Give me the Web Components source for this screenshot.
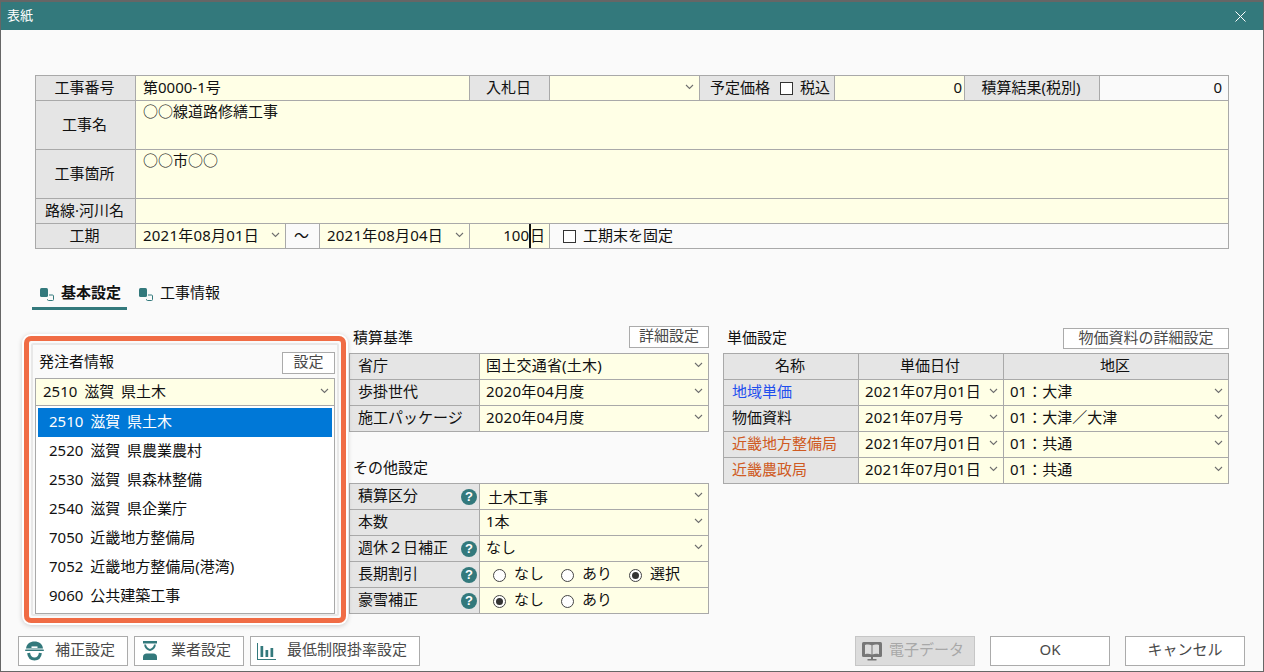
<!DOCTYPE html>
<html lang="ja">
<head>
<meta charset="utf-8">
<title>表紙</title>
<style>
html,body{margin:0;padding:0;background:#fafafa}
body{font:15px/20px "Noto Sans","Noto Sans CJK JP",sans-serif;color:#111}
.r{margin-left:auto}
.blue{color:#1f4fee}.org{color:#cf5a22}
</style>
</head>
<body>
<app-window>
  <span slot="title">表紙</span>

  <f-grid slot="top" style="width:1194px;grid-template-columns:99px 149px 33px 149px 79px 149px 134px 129px 134px 128px;grid-template-rows:24px 48px 48px 24px 24px">
    <f-cell kind="label" center>工事番号</f-cell>
    <f-cell kind="field" pad="7" style="grid-column:span 3">第0000-1号</f-cell>
    <f-cell kind="label" center>入札日</f-cell>
    <f-cell kind="field" select></f-cell>
    <f-cell kind="label" pad="10"><span>予定価格</span><x-check style="margin-left:10px;margin-right:7px"></x-check><span>税込</span></f-cell>
    <f-cell kind="field" num pr="2">0</f-cell>
    <f-cell kind="label" center>積算結果(税別)</f-cell>
    <f-cell kind="plain" num pr="6">0</f-cell>

    <f-cell kind="label" center>工事名</f-cell>
    <f-cell kind="field" pad="7" top style="grid-column:span 9">○○線道路修繕工事</f-cell>
    <f-cell kind="label" center>工事箇所</f-cell>
    <f-cell kind="field" pad="7" top style="grid-column:span 9">○○市○○</f-cell>
    <f-cell kind="label" center>路線·河川名</f-cell>
    <f-cell kind="field" style="grid-column:span 9"></f-cell>

    <f-cell kind="label" center>工期</f-cell>
    <f-cell kind="field" pad="7" select ls>2021年08月01日</f-cell>
    <f-cell kind="plain" center>〜</f-cell>
    <f-cell kind="field" pad="7" select ls>2021年08月04日</f-cell>
    <f-cell kind="field" num pr="4"><span class="r">100</span><i style="width:2px;height:24px;background:#111;margin:0 -1px 0 0;flex:none;align-self:flex-start"></i><span>日</span></f-cell>
    <f-cell kind="plain" pad="13" style="grid-column:span 5"><x-check style="margin-right:7px"></x-check><span>工期末を固定</span></f-cell>
  </f-grid>

  <tab-bar slot="tabs">
    <tab-item active>基本設定</tab-item>
    <tab-item>工事情報</tab-item>
  </tab-bar>

  <orderer-panel slot="left"></orderer-panel>

  <div slot="mid">
    <sec-head><span>積算基準</span><x-btn slot="action" style="width:80px;height:22px">詳細設定</x-btn></sec-head>
    <f-grid style="width:360px;grid-template-columns:129px 228px;grid-auto-rows:25px">
      <f-cell kind="label" pad="8">省庁</f-cell>
      <f-cell kind="field" pad="6" select ls>国土交通省(土木)</f-cell>
      <f-cell kind="label" pad="8">歩掛世代</f-cell>
      <f-cell kind="field" pad="6" select ls>2020年04月度</f-cell>
      <f-cell kind="label" pad="8">施工パッケージ</f-cell>
      <f-cell kind="field" pad="6" select ls>2020年04月度</f-cell>
    </f-grid>
    <sec-head style="margin-top:26px;height:25px;padding-bottom:8px"><span>その他設定</span></sec-head>
    <f-grid style="width:360px;grid-template-columns:129px 228px;grid-auto-rows:25px">
      <f-cell kind="label" pad="8"><span>積算区分</span><help-icon></help-icon></f-cell>
      <f-cell kind="field" pad="8" select><span style="padding-top:3px">土木工事</span></f-cell>
      <f-cell kind="label" pad="8">本数</f-cell>
      <f-cell kind="field" pad="6" select>1本</f-cell>
      <f-cell kind="label" pad="8"><span>週休２日補正</span><help-icon></help-icon></f-cell>
      <f-cell kind="field" pad="6" select>なし</f-cell>
      <f-cell kind="label" pad="8"><span>長期割引</span><help-icon></help-icon></f-cell>
      <f-cell kind="field" pad="13"><x-radio>なし</x-radio><x-radio>あり</x-radio><x-radio checked>選択</x-radio></f-cell>
      <f-cell kind="label" pad="8"><span>豪雪補正</span><help-icon></help-icon></f-cell>
      <f-cell kind="field" pad="13"><x-radio checked>なし</x-radio><x-radio>あり</x-radio></f-cell>
    </f-grid>
  </div>

  <div slot="right">
    <sec-head><span>単価設定</span><x-btn slot="action" style="width:166px;height:21px;margin-top:2px">物価資料の詳細設定</x-btn></sec-head>
    <f-grid style="width:506px;grid-template-columns:134px 144px 224px;grid-auto-rows:25px">
      <f-cell kind="label" center>名称</f-cell>
      <f-cell kind="label" center>単価日付</f-cell>
      <f-cell kind="label" center>地区</f-cell>
      <f-cell kind="label" pad="8"><span class="blue">地域単価</span></f-cell>
      <f-cell kind="field" pad="6" select ls>2021年07月01日</f-cell>
      <f-cell kind="field" pad="6" select>01：大津</f-cell>
      <f-cell kind="label" pad="8">物価資料</f-cell>
      <f-cell kind="field" pad="6" select ls>2021年07月号</f-cell>
      <f-cell kind="field" pad="6" select>01：大津／大津</f-cell>
      <f-cell kind="label" pad="8"><span class="org">近畿地方整備局</span></f-cell>
      <f-cell kind="field" pad="6" select ls>2021年07月01日</f-cell>
      <f-cell kind="field" pad="6" select>01：共通</f-cell>
      <f-cell kind="label" pad="8"><span class="org">近畿農政局</span></f-cell>
      <f-cell kind="field" pad="6" select ls>2021年07月01日</f-cell>
      <f-cell kind="field" pad="6" select>01：共通</f-cell>
    </f-grid>
  </div>

  <x-btn slot="foot-left" icon style="width:110px;height:30px">
    <svg slot="icon" width="19" height="20" viewBox="0 0 19 20" fill="#33797c"><path d="M1 7.500C1.500 3 5 .5 9.500.5S17.500 3 18 7.500z"/><rect x="0" y="8.500" width="19" height="1.600" rx=".8"/><rect x="6.500" y="5.400" width="6" height="1.600" fill="#fff"/><path d="M3.600 12c.5 3.800 3 6 5.900 6s5.400-2.200 5.900-6" fill="none" stroke="#33797c" stroke-width="3"/></svg>
    補正設定</x-btn>
  <x-btn slot="foot-left" icon style="width:110px;height:30px">
    <svg slot="icon" width="19" height="20" viewBox="0 0 19 20" fill="#33797c"><rect x="2" y="0" width="14" height="2.500"/><path d="M3.200 3.500h1.800c.3 2.500 1.800 3.500 4 4.500 2.200-1 3.700-2 4-4.500h1.800c-.2 3.300-1.800 5-4.300 6 0 0-1.500.5-1.500.5s-1.500-.5-1.500-.5c-2.500-1-4.100-2.700-4.300-6z"/><path d="M2 19v-3c0-2 1.500-3.500 3.500-3.500h7c2 0 3.500 1.500 3.500 3.500v3z"/></svg>
    業者設定</x-btn>
  <x-btn slot="foot-left" icon style="width:170px;height:30px">
    <svg slot="icon" width="19" height="20" viewBox="0 0 19 20" fill="#33797c"><path d="M0 2h1v16h18v1H0z"/><rect x="3.500" y="5" width="2.700" height="11"/><rect x="8.500" y="9" width="2.700" height="7"/><rect x="13.500" y="7" width="2.700" height="9"/></svg>
    最低制限掛率設定</x-btn>

  <x-btn slot="foot-right" disabled icon style="width:120px;height:30px">
    <svg slot="icon" width="20" height="19" viewBox="0 0 20 19"><rect x="0" y="0" width="20" height="15" rx="1.500" fill="#777"/><path d="M3 3c2-.6 4.800-.6 6.500.3V12.500C7.800 11.600 5 11.600 3 12.200zM17 3c-2-.6-4.800-.6-6.500.3V12.500c1.700-.9 4.500-.9 6.500-.3z" fill="#ddd"/><rect x="9" y="15" width="2" height="2.500" fill="#777"/><rect x="5.500" y="17" width="9" height="1.500" fill="#777"/></svg>
    電子データ</x-btn>
  <x-btn slot="foot-right" style="width:120px;height:30px">OK</x-btn>
  <x-btn slot="foot-right" style="width:120px;height:30px">キャンセル</x-btn>
</app-window>

<script>
function def(name, css, html, extra){
  customElements.define(name, class extends HTMLElement{
    constructor(){
      super();
      this.attachShadow({mode:'open'}).innerHTML = '<style>'+css+'</style>'+(typeof html==='function'?html(this):html);
    }
    connectedCallback(){ if(extra) extra(this); }
  });
}
const chevron = '<svg class="chev" width="9" height="6" viewBox="0 0 9 6"><path d="M1 1l3.500 3.500L8 1" fill="none" stroke="#6f6f6f" stroke-width="1.100"/></svg>';

def('app-window',`
  :host{display:flex;flex-direction:column;box-sizing:border-box;width:1264px;height:672px;border:1px solid #666;border-top-width:2px;background:#fafafa;overflow:hidden}
  .title{flex:none;box-sizing:border-box;height:28px;background:#33797c;color:#fff;font-size:13px;display:flex;align-items:center;padding:0 17px 0 6px;justify-content:space-between}
  .title span{padding-bottom:3px}
  .body{flex:1;display:flex;flex-direction:column;padding:45px 0 5px 34px;min-height:0}
  .cols{flex:1;display:flex;align-items:flex-start;margin-top:16px}
  .mid{margin-left:14px;width:360px}
  .right{margin-left:14px;width:506px}
  .foot{flex:none;display:flex;justify-content:space-between;margin-left:-17px;padding-right:18px}
  .fl{display:flex;gap:6px}
  .fr{display:flex;gap:15px}
`,`
  <div class="title"><span><slot name="title"></slot></span>
    <svg width="11" height="11" viewBox="0 0 11 11"><path d="M.5.5l10 10M10.500.5l-10 10" stroke="#fff" stroke-width="1" fill="none"/></svg>
  </div>
  <div class="body">
    <slot name="top"></slot>
    <slot name="tabs"></slot>
    <div class="cols">
      <slot name="left"></slot>
      <div class="mid"><slot name="mid"></slot></div>
      <div class="right"><slot name="right"></slot></div>
    </div>
    <div class="foot">
      <div class="fl"><slot name="foot-left"></slot></div>
      <div class="fr"><slot name="foot-right"></slot></div>
    </div>
  </div>
`);

def('f-grid',`:host{display:grid;gap:1px;padding:1px;background:#a9a9a9;box-sizing:border-box}`,`<slot></slot>`);

def('f-cell',`
  :host{display:flex;align-items:center;min-width:0;white-space:nowrap;box-sizing:border-box;padding:0 var(--pr,0) 3px var(--p,0)}
  :host([kind=label]){background:#e5e5e5}
  :host([kind=field]){background:#ffffe6}
  :host([kind=plain]){background:#fafafa}
  :host([center]){justify-content:center;padding-right:2px}
  :host([top]){align-items:flex-start;padding-bottom:0}
  :host([num]){justify-content:flex-end}
  :host([ls]){letter-spacing:.22px}
  .chev{margin-left:auto;margin-right:5px;flex:none}
`,(el)=>'<slot></slot>'+(el.hasAttribute('select')?chevron:''),(el)=>{
  if(el.hasAttribute('pad')) el.style.setProperty('--p',el.getAttribute('pad')+'px');
  if(el.hasAttribute('pr')) el.style.setProperty('--pr',el.getAttribute('pr')+'px');
});

def('x-check',`:host{display:inline-block;flex:none;box-sizing:border-box;width:13px;height:13px;margin-top:4px;border:1px solid #333;background:#fff}`,``);

def('x-radio',`
  :host{display:inline-flex;align-items:center;flex:none;margin-right:17px}
  .o{box-sizing:border-box;width:13px;height:13px;border-radius:50%;border:1px solid #444;background:#fff;margin:4px 8px 0 0;display:flex;align-items:center;justify-content:center}
  :host([checked]) .o::after{content:"";width:7px;height:7px;border-radius:50%;background:#333}
`,`<span class="o"></span><slot></slot>`);

def('help-icon',`
  :host{display:inline-flex;flex:none;margin:4px 2px 0 auto;width:16px;height:16px;border-radius:50%;background:#33797c;color:#fff;font:bold 13px/16px "Liberation Sans",sans-serif;align-items:center;justify-content:center}
`,`?`);

def('x-btn',`
  :host{display:inline-flex;align-items:center;justify-content:center;box-sizing:border-box;border:1px solid #ababab;background:#fff;color:#4a4a4a;white-space:nowrap;flex:none}
  :host([icon]){justify-content:flex-start;padding-left:6px}
  :host([disabled]){background:#dcdcdc;border-color:#c6c6c6;color:#a8a8a8}
  .ic{display:inline-flex;margin-right:11px}
  :host([disabled]) .ic{margin-right:7px}
  :host(:not([icon])) .ic{display:none}
  .t{padding-bottom:4px}
`,`<span class="ic"><slot name="icon"></slot></span><span class="t"><slot></slot></span>`);

def('tab-bar',`:host{display:flex;gap:4px;margin:31px 0 0 -3px;height:30px}`,`<slot></slot>`);

def('tab-item',`
  :host{display:flex;align-items:center;box-sizing:border-box;width:95px;padding:0 0 7px 8px;height:30px;white-space:nowrap}
  :host([active]){font-weight:700;border-bottom:3px solid #33797c;padding-bottom:4px}
  svg{margin:6px 7px 0 0;flex:none}
`,`<svg width="14" height="13" viewBox="0 0 14 13"><rect x="0" y="0" width="8" height="9" rx="1.500" fill="#33797c"/><path d="M9 7h3.500a1 1 0 0 1 1 1v3.500a1 1 0 0 1-1 1H8.500a1 1 0 0 1-1-1V11" fill="none" stroke="#33797c"/></svg><slot></slot>`);

def('sec-head',`
  :host{display:flex;align-items:flex-start;justify-content:space-between;height:27px;padding:0 0 5px 4px;box-sizing:border-box}
  .l{align-self:center}
`,`<span class="l"><slot></slot></span><slot name="action"></slot>`);

def('orderer-panel',`
  :host{display:block;position:relative;width:300px;padding-top:26px;box-sizing:border-box}
  .head{display:flex;align-items:center;justify-content:space-between;height:22px;padding-left:4px}
  .head>span{padding-bottom:4px}
  .combo{box-sizing:border-box;height:28px;margin-top:4px;padding:0 0 3px 7px;border:1px solid #a9a9a9;background:#ffffe6;display:flex;align-items:center;word-spacing:3px}
  .chev{margin-left:auto;margin-right:5px}
  .list{box-sizing:border-box;margin-top:-1px;border:1px solid #a9a9a9;background:#fff;padding:2px;position:relative}
  .it{height:29px;line-height:26px;padding-left:11px;word-spacing:3px}
  .it.sel{background:#0078d7;color:#fff}
  .hl{position:absolute;left:-11px;top:10px;width:322px;height:287px;box-sizing:border-box;border:5px solid #f06c45;border-radius:7px;box-shadow:0 0 0 2px #fff,0 1px 5px 2px rgba(0,0,0,.18);pointer-events:none}
  .hl::after{content:"";position:absolute;inset:2px;border:2px solid #e8e8e8;border-radius:2px}
`,`
  <div class="head"><span>発注者情報</span><x-btn style="width:53px;height:22px">設定</x-btn></div>
  <div class="combo"><span>2510 滋賀 県土木</span>${chevron}</div>
  <div class="list">
    <div class="it sel">2510 滋賀 県土木</div>
    <div class="it">2520 滋賀 県農業農村</div>
    <div class="it">2530 滋賀 県森林整備</div>
    <div class="it">2540 滋賀 県企業庁</div>
    <div class="it">7050 近畿地方整備局</div>
    <div class="it">7052 近畿地方整備局(港湾)</div>
    <div class="it">9060 公共建築工事</div>
  </div>
  <div class="hl"></div>
`);
</script>
</body>
</html>
